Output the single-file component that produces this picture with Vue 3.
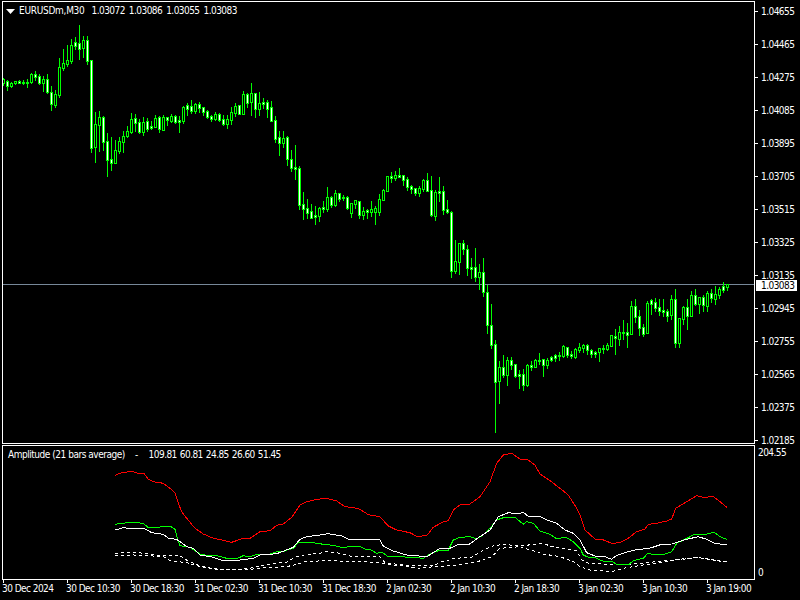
<script setup>
const raw = [
[233,238,250,255,0],[240,244,258,270,1],[245,249,258,262,0],[243,243,250,252,0],[240,243,248,250,1],[240,246,248,252,1],[238,246,247,262,1],[218,222,246,250,0],[212,223,231,240,1],[223,229,249,252,1],[228,238,248,272,0],[222,238,276,280,1],[258,277,311,330,1],[270,282,315,322,0],[175,202,285,292,0],[148,190,204,210,0],[135,180,192,198,0],[118,136,183,188,0],[112,127,138,148,1],[75,130,147,178,1],[108,121,145,170,0],[108,121,182,192,1],[180,181,443,457,1],[336,373,441,486,0],[333,352,374,452,0],[348,351,425,450,1],[398,424,480,527,1],[412,478,488,510,1],[420,451,490,490,0],[412,424,452,458,0],[393,408,425,455,0],[378,394,408,412,0],[338,358,396,398,0],[343,355,368,393,1],[358,366,396,398,1],[350,366,395,405,0],[355,363,387,392,1],[363,378,384,386,1],[345,355,381,381,0],[348,351,387,395,1],[345,351,389,390,0],[350,351,361,375,1],[343,348,363,366,0],[345,348,366,370,1],[348,360,365,397,1],[318,321,362,368,0],[308,316,327,345,1],[300,317,333,340,1],[308,311,333,340,0],[305,312,325,335,1],[322,322,337,345,1],[330,333,351,353,1],[345,348,358,363,1],[335,342,358,360,0],[338,342,360,363,1],[345,358,371,375,1],[345,358,373,385,0],[320,336,360,372,0],[310,318,340,347,0],[315,316,342,342,1],[273,282,342,342,0],[280,283,308,320,1],[250,280,307,345,0],[280,280,327,352,1],[275,310,327,345,0],[293,307,313,325,1],[300,307,327,352,1],
[93,112,152,152,1],[138,150,206,216,1],[183,202,218,255,1],[183,205,219,231,0],[198,202,266,285,1],[240,268,293,303,1],[225,291,297,327,1],[288,295,404,417,1],[366,403,416,447,1],[388,415,429,445,1],[402,424,443,445,1],[408,435,440,462,1],[410,415,438,453,0],[393,411,417,426,1],[351,382,416,423,0],[378,382,404,411,1],[361,370,404,407,0],[368,370,387,393,1],[376,381,384,390,1],[378,382,414,417,1],[400,400,428,441,0],[391,391,401,414,0],[393,394,434,444,1],[411,424,434,447,0],[418,421,425,445,1],[393,418,426,438,0],[408,415,425,462,0],[373,388,425,435,0],[358,361,389,389,0],[318,319,362,362,0],[306,319,323,335,1],[304,316,323,330,0],[294,316,320,320,1],[316,316,330,345,1],[320,328,351,360,1],[345,349,357,369,1],[354,355,368,375,1],[348,355,369,378,0],[328,331,358,362,0],[309,331,362,364,1],[319,361,436,438,1],[361,367,438,450,0],[321,363,369,393,1],[348,364,419,432,1],[390,418,426,428,1],[424,427,602,622,1],[511,574,602,609,0],[520,520,576,612,0],[510,520,537,552,1],[526,538,594,615,1],
[84,112,117,144,1],[54,112,140,153,1],[102,126,140,177,0],[84,127,185,197,1],[164,187,284,308,1],[222,286,344,353,1],[330,343,455,605,1],[393,412,452,518,0],[375,412,435,441,1],[381,390,435,465,0],[381,391,405,417,1],[402,403,438,441,1],[420,433,438,474,1],[417,433,465,480,1],[402,405,465,467,0],[393,406,411,420,1],[387,391,411,411,0],[369,391,393,402,1],[387,388,405,438,1],[384,390,405,414,0],[378,382,390,393,1],[372,375,384,393,1],[366,375,378,390,1],[345,348,378,381,0],[351,352,375,381,1],[363,373,378,384,1],[354,357,381,384,0],[339,351,360,366,0],[342,345,354,366,0],[342,345,360,372,1],[357,361,372,381,1],[363,366,372,381,1],[354,355,366,393,0],[345,354,355,369,1],[339,346,357,360,0],[315,316,348,348,0],[297,319,324,372,1],[288,306,327,345,0],[270,306,309,327,1],[279,306,316,351,1],[213,228,312,312,0],[207,229,261,276,1],[240,259,294,315,1],[282,292,312,318,1],[213,219,309,309,0],[207,210,222,252,1],[204,217,234,243,1],[207,232,243,255,1],[207,240,246,258,1],[237,244,258,273,1],[195,207,255,267,0],[177,207,339,351,1],[264,264,339,351,0],[228,231,267,282,0],[207,232,258,297,1],[183,195,258,258,0],[177,195,222,225,1],[201,201,222,249,0],[195,201,225,243,1],[183,189,228,243,0],[177,189,204,216,1],[168,192,207,222,0],[171,177,195,204,0],[156,168,180,186,1],[162,162,171,180,0],
]

const candles = raw.map((c, i) => {
  const off = i < 67 ? 0 : i < 117 ? 70 : 230
  const y = v => Math.round(off + v / 3)
  const hi = y(c[0])
  const top = y(c[1])
  const bot = Math.max(y(c[2]), top + 1)
  const lo = Math.max(y(c[3]), bot)
  return { x: 3 + 4 * i, hi, top, bot, lo, white: c[4] === 1 }
})

const scale = (offx, list) => {
  const out = []
  for (let i = 0; i < list.length; i += 2) {
    out.push([offx + list[i] / 3, 440 + list[i + 1] / 3])
  }
  return out
}
const line = (a, b, c) => {
  const pts = [...scale(0, a), ...scale(270, b), ...scale(530, c)]
  pts.sort((p, q) => p[0] - q[0])
  return pts.map(p => p[0].toFixed(1) + ',' + p[1].toFixed(1)).join(' ')
}

const red = line(
  [345,106,365,98,395,94,415,100,432,100,445,118,460,125,490,130,510,145,525,158,535,190,545,215,560,235,585,265,610,282,640,295,670,301,695,307,730,295,750,295,780,275],
  [0,272,20,256,40,252,65,232,90,195,110,185,140,178,170,175,200,183,225,200,250,203,270,208,295,224,330,230,355,258,380,270,420,278,440,289,470,287,490,262,520,245,535,242,550,210,570,195,600,192,630,170,660,125,680,70,700,45,725,40,750,57,775,60,795,75],
  [30,102,60,122,90,145,115,165,140,205,150,225,165,270,195,297,215,298,245,310,270,308,290,298,320,275,345,267,355,253,380,250,410,243,425,237,437,205,470,185,500,167,520,172,550,170,570,185,590,202]
)
const green = line(
  [345,253,365,250,395,247,430,250,445,263,470,264,490,258,510,258,525,268,532,295,540,317,570,322,600,342,620,346,650,347,680,355,710,356,730,347,750,350,770,343],
  [0,342,20,335,40,335,50,330,70,325,85,308,130,308,160,313,190,316,220,323,240,319,270,319,285,327,300,328,320,340,335,336,352,348,380,350,430,352,460,355,480,342,510,330,535,330,550,300,570,292,600,290,620,296,640,285,660,265,680,240,700,233,735,232,760,253,770,245,790,250],
  [30,273,60,283,78,295,110,293,130,305,150,325,160,345,175,352,195,353,225,366,245,364,260,373,295,375,310,362,340,355,352,341,395,345,425,335,440,310,465,298,490,285,530,282,553,277,570,290,590,298]
)
const white = line(
  [345,270,370,263,410,267,432,265,455,278,490,283,505,295,530,298,560,320,580,325,600,345,640,352,670,362,720,360,760,355,780,345],
  [0,343,20,341,70,322,90,298,110,290,150,285,175,281,215,288,240,300,270,298,330,300,340,318,370,333,410,345,470,350,510,325,540,325,565,313,595,315,625,293,660,270,685,230,715,218,745,222,760,217,775,229],
  [30,229,50,240,80,250,105,270,130,280,150,300,170,338,200,350,220,348,245,358,260,346,295,335,325,328,355,326,395,313,425,312,470,298,505,290,530,298,555,310,590,315]
)
const dashA = line(
  [345,340,400,336,445,342,490,348,540,347,555,358,600,378,640,386,690,390,750,385],
  [0,372,50,366,75,352,110,343,150,340,170,335,210,340,240,348,280,350,330,350,345,368,400,375,490,378,510,367,555,355,605,352,640,330,670,318,700,313,750,318],
  [40,310,60,318,140,332,155,360,175,370,240,373,280,375,330,370,380,365,430,360,500,352,540,358,590,365]
)
const dashB = line(
  [345,347,400,345,445,347,490,350,510,362,560,368,600,380,640,387,690,390,750,388],
  [0,382,50,380,80,373,110,364,180,362,250,365,330,367,345,372,400,378,450,385,490,380,560,376,620,366,665,350,690,325,750,320],
  [40,342,90,350,130,365,150,380,185,392,250,394,280,385,320,378,360,372,430,361,500,353,540,359,590,366]
)

const prices = ['1.04655','1.04465','1.04275','1.04085','1.03895','1.03705','1.03515','1.03325','1.03135','1.02945','1.02755','1.02565','1.02375','1.02185']
const times = ['30 Dec 2024','30 Dec 10:30','30 Dec 18:30','31 Dec 02:30','31 Dec 10:30','31 Dec 18:30','2 Jan 02:30','2 Jan 10:30','2 Jan 18:30','3 Jan 02:30','3 Jan 10:30','3 Jan 19:00']
</script>

<template>
  <div class="terminal">
    <section class="pane pane-main">
      <div class="plot">
        <svg class="canvas" width="751" height="441" viewBox="3 2 751 441" shape-rendering="crispEdges">
          <rect x="3" y="284" width="751" height="1" fill="#778899" />
          <g v-for="c in candles" :key="c.x">
            <rect :x="c.x" :y="c.hi" width="1" :height="c.lo - c.hi + 1" fill="#00ff00" />
            <rect :x="c.x - 1" :y="c.top" width="3" :height="c.bot - c.top + 1" fill="#00ff00" />
            <rect v-if="c.bot - c.top > 1" :x="c.x" :y="c.top + 1" width="1" :height="c.bot - c.top - 1" :fill="c.white ? '#ffffff' : '#000000'" />
          </g>
        </svg>
        <div class="legend main-legend">
          <svg class="caret" width="9" height="5" viewBox="0 0 9 5"><path d="M0 0H9L4.5 5Z" fill="#fff" /></svg>
          <span class="symbol">EURUSDm,M30</span>
          <span>1.03072</span><span>1.03086</span><span>1.03055</span><span>1.03083</span>
        </div>
      </div>
      <div class="price-axis">
        <span v-for="p in prices" :key="p" class="price">{{ p }}</span>
        <span class="current">1.03083</span>
      </div>
    </section>

    <section class="pane pane-sub">
      <div class="plot">
        <svg class="canvas" width="751" height="133" viewBox="3 446 751 133" shape-rendering="crispEdges">
          <polyline :points="dashA" class="ln" stroke="#fff" stroke-dasharray="3 3" />
          <polyline :points="dashB" class="ln" stroke="#fff" stroke-dasharray="3 3" />
          <polyline :points="red" class="ln" stroke="#ff0000" />
          <polyline :points="green" class="ln" stroke="#00ff00" />
          <polyline :points="white" class="ln" stroke="#fff" />
        </svg>
        <div class="legend sub-legend">
          <span class="ind-name">Amplitude (21 bars average)</span>
          <span class="dash">-</span>
          <span>109.81</span><span>60.81</span><span>24.85</span><span>26.60</span><span>51.45</span>
        </div>
      </div>
      <div class="scale-axis">
        <span>204.55</span>
        <span>0</span>
      </div>
    </section>

    <footer class="time-axis">
      <span v-for="t in times" :key="t" class="time">{{ t }}</span>
    </footer>
  </div>
</template>

<style scoped>
.terminal {
  width: 800px;
  height: 600px;
  background: #000;
  color: #fff;
  font-family: "DejaVu Sans", "Liberation Sans", sans-serif;
  font-stretch: condensed;
  font-size: 10px;
  letter-spacing: -0.55px;
  line-height: 12px;
  display: flex;
  flex-direction: column;
  padding: 1px 0 0 2px;
  box-sizing: border-box;
  overflow: hidden;
}
.pane {
  display: flex;
}
.pane-main {
  height: 443px;
}
.pane-sub {
  height: 135px;
  margin-top: 1px;
}
.plot {
  position: relative;
  width: 753px;
  box-sizing: border-box;
  border: 1px solid #fff;
  overflow: hidden;
  flex: none;
}
.canvas {
  display: block;
}
.ln {
  fill: none;
  stroke-width: 1;
}
.legend {
  position: absolute;
  display: flex;
  align-items: center;
  white-space: nowrap;
}
.main-legend {
  top: 3px;
  left: 3px;
  gap: 4px;
}
.symbol {
  margin-right: 3px;
  letter-spacing: -0.28px;
}
.sub-legend {
  top: 3px;
  left: 5px;
  gap: 3px;
}
.ind-name {
  letter-spacing: -0.47px;
}
.dash {
  margin: 0 8px 0 7px;
}
.price-axis {
  position: relative;
  flex: 1;
  display: flex;
  flex-direction: column;
  justify-content: space-between;
  padding: 6px 0 0;
  height: 444px;
  box-sizing: border-box;
  line-height: 9px;
}
.price {
  position: relative;
  padding-left: 6px;
  height: 9px;
}
.price::before {
  content: "";
  position: absolute;
  left: 0;
  top: 4px;
  width: 3px;
  height: 1px;
  background: #fff;
}
.current {
  position: absolute;
  left: 1px;
  top: 279px;
  width: 41px;
  height: 11px;
  line-height: 11px;
  padding-left: 5px;
  box-sizing: border-box;
  background: #fff;
  color: #000;
}
.scale-axis {
  flex: 1;
  display: flex;
  flex-direction: column;
  justify-content: space-between;
  padding: 3px 0 0 3px;
  height: 132px;
  box-sizing: border-box;
  line-height: 9px;
}
.time-axis {
  display: flex;
  padding-left: 1px;
}
.time {
  position: relative;
  width: 64px;
  flex: none;
  padding-top: 3px;
  white-space: nowrap;
  text-indent: -1px;
}
.time::before {
  content: "";
  position: absolute;
  left: 0;
  top: 0;
  width: 1px;
  height: 3px;
  background: #fff;
}
</style>
